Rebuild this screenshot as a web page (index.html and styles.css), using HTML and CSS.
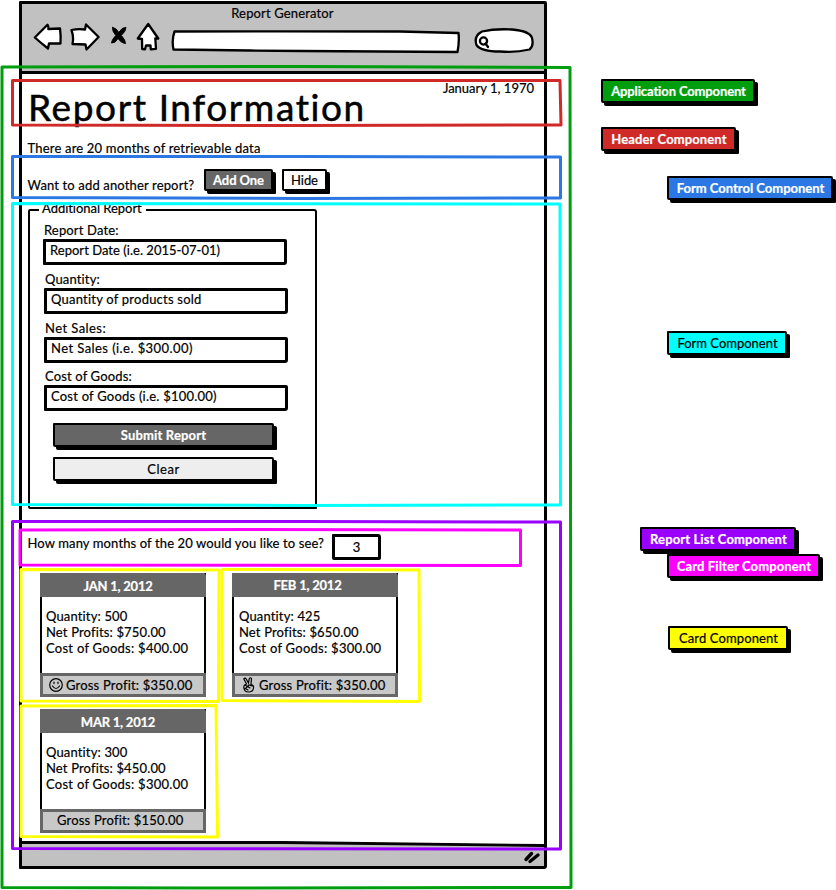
FILE: index.html
```html
<!DOCTYPE html>
<html lang="en">
<head>
<meta charset="utf-8">
<title>Report Generator</title>
<link rel="stylesheet" href="styles.css">
</head>
<body>
<div class="board">
  <div class="window">
    <header class="toolbar">
      <div class="window-title">Report Generator</div>
      <div class="nav">
        <svg class="ic" width="30" height="30" viewBox="33 22 30 30"><path d="M34.800 37.500L47.500 24.800Q49 26.500 48.300 29L60 28.500Q61 36 60.500 43.500L49 43.500L48 48.500Q41 43 34.800 37.500Z"/></svg>
        <svg class="ic fwd" width="30" height="30" viewBox="70 22 30 30"><path d="M86 24.500L98.600 37L86.500 49.500L85.500 44.500L72.500 44Q74 37 71.500 30Q78 28.500 85 29.500Z"/></svg>
        <svg class="ic stop" width="20" height="24" viewBox="110 24 20 24"><path d="M113.500 27.500Q117 27.500 119.800 32.500Q123 27 127 27.500Q127 31 122.300 35.500Q126.500 40 126.500 43.500Q122.500 43.500 119 38.500Q116 43.500 112.500 43Q112.500 40 116.800 35.500Q113 31 113.500 27.500Z"/></svg>
        <svg class="ic home" width="24" height="30" viewBox="136 22 24 30"><path d="M148.200 24L158.300 38.500L155.300 38.500L156 48.800L150.800 49.300L150.500 45.500L146 45.500L145 49.300L142.200 49L142 39L137.800 38.500Z"/></svg>
        <svg class="ic url" width="290" height="26" viewBox="171 29 290 26"><path d="M174.500 31.500L280 31.300L400 31.500L458.500 33Q459.500 42 457.500 52L300 51L250 50.500L173.500 49.500Q171.500 40 174.500 31.500Z"/></svg>
        <svg class="ic find" width="62" height="28" viewBox="473 27 62 28"><path d="M482 31.500Q495 28.500 512 29.500Q530 31 532 38Q534 46 529.500 49.500Q515 53 500 51.500Q481 51.500 476.500 45Q473.500 36 482 31.500Z"/><circle cx="483.500" cy="41" r="3.600"/><path d="M485.500 43.500L488 47"/></svg>
      </div>
    </header>
    <main class="page">
      <div class="head"><h1>Report Information</h1><span class="date">January 1, 1970</span></div>
      <p class="summary">There are 20 months of retrievable data</p>
      <div class="control"><p>Want to add another report?</p><button class="btn dark">Add One</button><button class="btn hide">Hide</button></div>
      <section class="form">
        <div class="legend">Additional Report</div>
        <div class="field first"><label>Report Date:</label><div class="input">Report Date (i.e. 2015-07-01)</div></div>
        <div class="field"><label>Quantity:</label><div class="input">Quantity of products sold</div></div>
        <div class="field loose"><label>Net Sales:</label><div class="input">Net Sales (i.e. $300.00)</div></div>
        <div class="field"><label>Cost of Goods:</label><div class="input">Cost of Goods (i.e. $100.00)</div></div>
        <button class="btn dark wide">Submit Report</button>
        <button class="btn light wide">Clear</button>
      </section>
      <div class="filter"><p>How many months of the 20 would you like to see?</p><div class="count">3</div></div>
      <div class="cards">
        <article class="card"><h2>JAN 1, 2012</h2><div class="facts"><p>Quantity: 500</p><p>Net Profits: $750.00</p><p class="cost">Cost of Goods: $400.00</p></div>
          <footer><svg class="face" width="16" height="16" viewBox="0 0 16 16"><circle cx="8" cy="8" r="6.300"/><path d="M4.500 9Q8 14 11.500 9"/><path class="eye" d="M6 5v1.500M10 5v1.500"/></svg>Gross Profit: $350.00</footer></article>
        <article class="card second"><h2>FEB 1, 2012</h2><div class="facts"><p>Quantity: 425</p><p>Net Profits: $650.00</p><p class="cost">Cost of Goods: $300.00</p></div>
          <footer><svg class="hand" width="16" height="18" viewBox="0 0 16 18"><path d="M5.500 8L2.800 2.800Q4 1.500 5.200 3L7.500 7L8.300 2.500Q9.500 1 10.500 2.500L10 8.500Q13 9 12.500 12Q12 16 7.500 16Q3.500 16 3 12.500Q2 9 5.500 8ZM4 9L9 12M5 12L8 9L11 10M4 12.500L7 14"/></svg>Gross Profit: $350.00</footer></article>
        <article class="card third"><h2>MAR 1, 2012</h2><div class="facts"><p>Quantity: 300</p><p>Net Profits: $450.00</p><p class="cost">Cost of Goods: $300.00</p></div>
          <footer>Gross Profit: $150.00</footer></article>
      </div>
    </main>
    <footer class="status">
      <svg class="edge" width="522" height="8" viewBox="0 0 522 8"><path class="above" d="M0 0H522V5L260 1.500L0 1.500Z"/><path class="rule" d="M0 2.500L260 2.500L522 5.500"/></svg>
      <svg class="grip" width="18" height="14" viewBox="524 850 18 14"><path d="M527 859.500L532.500 853.500M531 861.500L539 855"/></svg>
    </footer>
  </div>
  <aside class="key">
    <div class="tag application">Application Component</div>
    <div class="tag header">Header Component</div>
    <div class="tag control-tag">Form Control Component</div>
    <div class="tag form-tag">Form Component</div>
    <div class="tag list">Report List Component</div>
    <div class="tag filter-tag">Card Filter Component</div>
    <div class="tag card-tag">Card Component</div>
  </aside>
  <svg class="frames" width="836" height="890" viewBox="0 0 836 890">
    <path stroke="#009e0f" d="M2 67L300 66.500L570 67.500L570.500 480L571 887.500L200 888L2 887.500Z"/>
    <path stroke="#cf2a27" d="M12.500 80.500L300 80.500L560 80.500L561 125L300 125.500L12.500 125Z"/>
    <path stroke="#2b78e4" d="M12.500 156.500L300 156.500L560.500 157L560.500 198L300 198.500L12.500 197.500Z"/>
    <path stroke="#00ffff" d="M12.500 203.500L560 204L560.500 505L300 505.500L12.500 504.500Z"/>
    <path stroke="#9900ff" d="M12.500 521.500L300 521.500L560.500 522L560.500 849L12.500 848.500Z"/>
    <path stroke="#ff00ff" d="M20 530L250 529.500L520.500 530L520.500 565.500L20 565Z"/>
    <path stroke="#ffff00" d="M21 569.500L219 570L218.500 701.500L21 701Z"/>
    <path stroke="#ffff00" d="M222 569.500L419 570L419.500 701.500L222 700.500Z"/>
    <path stroke="#ffff00" d="M21 706L216 705.500L217.500 837L21 836.500Z"/>
  </svg>
</div>
</body>
</html>
```

FILE: styles.css
```css
* { box-sizing: border-box; }
body { margin: 0; background: #fff; color: #000; font: 13px/16px Lato, "Liberation Sans", sans-serif; letter-spacing: 0.15px; font-variant-ligatures: none; -webkit-text-stroke: 0.2px; }
p, h1, h2 { margin: 0; font-weight: 400; }
.board { position: relative; display: flex; width: 836px; height: 890px; overflow: hidden; }
.window { display: flex; flex-direction: column; width: 528px; height: 868px; margin: 1px 0 0 19px; border: 3px solid #000; border-radius: 1px 2px 3px 1px; background: #fff; }
.toolbar { height: 70px; background: #c1c1c1; border-bottom: 3px solid #000; }
.window-title { height: 18px; padding: 1px 1px 0 0; text-align: center; }
.nav { display: flex; align-items: flex-start; padding-left: 11px; }
.ic { flex: none; fill: #fff; stroke: #000; stroke-width: 2.3; stroke-linejoin: round; stroke-linecap: round; }
.fwd { margin-left: 7px; }
.stop { margin: 2px 0 0 9px; fill: #000; stroke-width: 1; }
.home { margin-left: 7px; }
.url { margin: 7px 0 0 11px; }
.find { margin: 5px 0 0 12px; }
.page { flex: 1; padding-left: 6px; }
.head { display: flex; justify-content: space-between; height: 66px; padding-right: 10px; }
h1 { font-size: 37px; line-height: 44px; padding-top: 11px; letter-spacing: 1.6px; -webkit-text-stroke: 0.5px; }
.date { padding-top: 6px; letter-spacing: 0; }
.summary { height: 29px; letter-spacing: 0.19px; }
.control { display: flex; height: 40px; }
.control p { width: 175px; padding-top: 8px; }
.summary, .control p, .filter p { text-indent: -0.5px; }
.btn { display: block; padding: 0; border: 2px solid #000; border-radius: 1px 2px 1px 2px; box-shadow: 3px 3px 0 #000; font: inherit; letter-spacing: inherit; color: #000; text-align: center; background: #fff; }
.control .btn { width: 69px; height: 22px; margin-left: 1px; letter-spacing: -0.08px; }
.control .hide { width: 45px; margin-left: 9px; }
.dark.dark { background: #666; color: #fff; font-weight: 700; }
.light { background: #eee; letter-spacing: 0.5px; }
.form { width: 289px; height: 300px; border: 2px solid #000; border-radius: 2px 3px 1px 2px; padding-left: 14px; }
.legend { width: 107px; height: 16px; margin: -11px 0 0 -5px; padding-left: 3px; background: #fff; letter-spacing: -0.03px; }
.field { height: 49px; padding-left: 1px; }
.field.first { height: 48px; padding-left: 0; margin: 6px 0 1px; }
.field.first .input { letter-spacing: 0.03px; }
.field label { display: block; height: 17px; }
.input { width: 244px; height: 26px; margin-left: -1px; border: 3px solid #000; border-radius: 1px 2px 3px 1px; padding: 0 4px; letter-spacing: 0.22px; }
.loose { height: 48px; }
.loose, .loose .input { letter-spacing: 0.43px; }
.wide { width: 221px; height: 24px; margin: 6px 0 0 9px; }
.wide + .wide { margin-top: 10px; }
.filter { display: flex; height: 64px; padding-top: 25px; }
.filter p { width: 304px; padding-top: 1px; letter-spacing: 0.12px; }
.count { width: 49px; height: 26px; border: 3px solid #000; border-radius: 1px 3px 2px 2px; text-align: center; line-height: 20px; }
.cards { display: grid; grid-template-columns: 166px 166px; gap: 12px 26px; padding-left: 12px; }
.card { height: 124px; background: #fff; border: solid #000; border-width: 0 2px; display: flex; flex-direction: column; }
.card h2 { height: 24px; margin: 0 -2px; padding-right: 10px; background: #666; border-top-right-radius: 3px; color: #fff; text-align: center; font: 700 13px/26px Lato, sans-serif; letter-spacing: -0.22px; }
.second h2 { padding-right: 15px; line-height: 24px; }
.facts { flex: 1; padding: 11px 0 0 4px; }
.second .facts { padding-left: 5px; }
.cost { letter-spacing: 0.27px; }
.card footer { display: flex; align-items: center; height: 24px; margin: 0 -2px; padding-left: 5px; border: 3px solid #666; background: #c8c8c8; letter-spacing: 0.19px; }
.second footer { padding-left: 6px; }
.card.third footer { padding: 0 0 2px 14px; }
.face { margin-right: 2px; }
.hand { margin-right: 2px; }
.face, .hand { flex: none; fill: none; stroke: #000; stroke-width: 1.2; stroke-linecap: round; }
.status { position: relative; height: 26px; background: #c1c1c1; text-align: right; }
.edge { position: absolute; left: 0; top: 0; }
.above { fill: #fff; }
.rule { fill: none; stroke: #000; stroke-width: 2.8; }
.grip { margin: 10px 3px 0 0; fill: none; stroke: #000; stroke-width: 3.4; stroke-linecap: round; }
.key { display: flex; flex-direction: column; align-items: flex-start; margin-left: 54px; padding-top: 79px; }
.tag { height: 24px; width: 154px; border: 2px solid #000; border-radius: 1px 2px 1px 2px; box-shadow: 3px 3px 0 #000; color: #fff; font-weight: 700; text-align: center; text-indent: 1px; line-height: 20px; letter-spacing: 0.12px; flex: none; }
.application { background: #009e0f; letter-spacing: -0.12px; }
.header { background: #cf2a27; width: 135px; margin-top: 24px; }
.control-tag { background: #2b78e4; width: 166px; margin: 25px 0 0 66px; letter-spacing: 0; }
.form-tag { background: #0ff; color: #000; font-weight: 400; width: 120px; margin: 131px 0 0 66px; letter-spacing: 0; }
.list { background: #90f; width: 156px; margin: 172px 0 0 39px; }
.filter-tag { background: #f0f; width: 153px; margin: 3px 0 0 66px; }
.card-tag { background: #ff0; color: #000; font-weight: 400; width: 120px; margin: 48px 0 0 67px; }
.frames { position: absolute; left: 0; top: 0; fill: none; stroke-width: 3; stroke-linejoin: round; }
```
